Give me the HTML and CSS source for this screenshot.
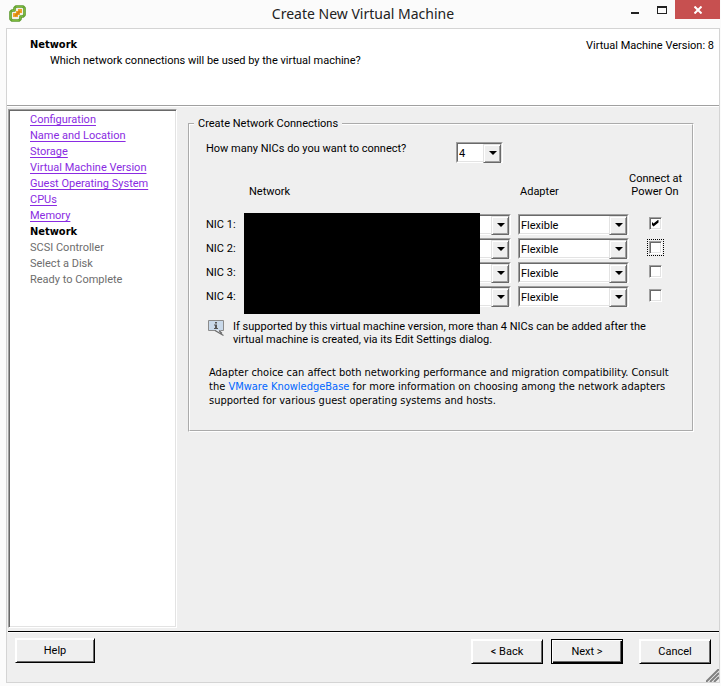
FILE: index.html
```html
<!DOCTYPE html>
<html lang="en">
<head>
<meta charset="utf-8">
<title>Create New Virtual Machine</title>
<link rel="stylesheet" href="styles.css">
</head>
<body>
<header class="titlebar">
  <svg class="app-icon" viewBox="0 0 17 17" width="17" height="17" aria-hidden="true">
    <path d="M7 1.500h7l1.500 1.500v7L14 11.500h-2.500V14L10 15.500H3L1.500 14V7L3 5.500h2.500V3z" fill="#f4f1ea" stroke="#5c9a2c" stroke-width="2.600" stroke-linejoin="round"/>
    <path d="M7 1.500h7l1.500 1.500v7L14 11.500h-2.500V14L10 15.500H3L1.500 14V7L3 5.500h2.500V3z" fill="none" stroke="#7cba3c" stroke-width="1"/>
    <path d="M9 4h4v4h-2v2H9v2H4V8h3V6h2z" fill="#f2a62c"/>
    <path d="M6 11l5-5" stroke="#d98410" stroke-width="2"/>
  </svg>
  <h1 class="title">Create New Virtual Machine</h1>
  <div class="window-controls">
    <button class="win-btn" type="button" aria-label="Minimize"><svg viewBox="0 0 10 12" width="10" height="12"><path d="M1 9h8" stroke="#222" stroke-width="2"/></svg></button>
    <button class="win-btn" type="button" aria-label="Maximize"><svg viewBox="0 0 10 12" width="10" height="12"><path d="M0 2h10v8H0zM1 4v5h8V4z" fill="#222" fill-rule="evenodd"/></svg></button>
    <button class="win-btn win-close" type="button" aria-label="Close"><svg viewBox="0 0 8 8" width="8" height="8"><path d="M.5.500l7 7M7.500.500l-7 7" stroke="#fff" stroke-width="2"/></svg></button>
  </div>
</header>
<div class="window">
  <section class="banner">
    <div>
      <h2 class="step-title">Network</h2>
      <p class="step-help">Which network connections will be used by the virtual machine?</p>
    </div>
    <p class="version">Virtual Machine Version: 8</p>
  </section>
  <div class="content">
    <nav class="steps">
      <ul>
        <li><a href="#configuration">Configuration</a></li>
        <li><a href="#name">Name and Location</a></li>
        <li><a href="#storage">Storage</a></li>
        <li><a href="#version">Virtual Machine Version</a></li>
        <li><a href="#guest">Guest Operating System</a></li>
        <li><a href="#cpus">CPUs</a></li>
        <li><a href="#memory">Memory</a></li>
        <li class="current" aria-current="step">Network</li>
        <li>SCSI Controller</li>
        <li>Select a Disk</li>
        <li>Ready to Complete</li>
      </ul>
    </nav>
    <main class="panel">
      <fieldset class="group">
        <legend>Create Network Connections</legend>
        <div class="count-row">
          <label for="nic-count">How many NICs do you want to connect?</label>
          <span class="combo combo-count"><select id="nic-count"><option>4</option></select></span>
        </div>
        <div class="nics">
          <table class="nic-table">
            <thead>
              <tr><th class="col-name"></th><th class="col-network">Network</th><th class="col-adapter">Adapter</th><th class="col-power">Connect at<br>Power On</th></tr>
            </thead>
            <tbody>
              <tr>
                <td><label for="net1">NIC 1:</label></td>
                <td><span class="combo combo-network"><select id="net1"><option></option></select></span></td>
                <td><span class="combo"><select aria-label="NIC 1 adapter"><option>Flexible</option></select></span></td>
                <td class="power"><input type="checkbox" aria-label="Connect NIC 1 at power on" checked></td>
              </tr>
              <tr>
                <td><label for="net2">NIC 2:</label></td>
                <td><span class="combo combo-network"><select id="net2"><option></option></select></span></td>
                <td><span class="combo"><select aria-label="NIC 2 adapter"><option>Flexible</option></select></span></td>
                <td class="power"><input class="focused" type="checkbox" aria-label="Connect NIC 2 at power on"></td>
              </tr>
              <tr>
                <td><label for="net3">NIC 3:</label></td>
                <td><span class="combo combo-network"><select id="net3"><option></option></select></span></td>
                <td><span class="combo"><select aria-label="NIC 3 adapter"><option>Flexible</option></select></span></td>
                <td class="power"><input type="checkbox" aria-label="Connect NIC 3 at power on"></td>
              </tr>
              <tr>
                <td><label for="net4">NIC 4:</label></td>
                <td><span class="combo combo-network"><select id="net4"><option></option></select></span></td>
                <td><span class="combo"><select aria-label="NIC 4 adapter"><option>Flexible</option></select></span></td>
                <td class="power"><input type="checkbox" aria-label="Connect NIC 4 at power on"></td>
              </tr>
            </tbody>
          </table>
          <div class="redaction"></div>
        </div>
        <div class="note">
          <svg viewBox="0 0 17 17" width="17" height="17" aria-hidden="true">
            <path d="M.5.500h15v10H.5z" fill="#c9d9ea" stroke="#8b8b8b"/>
            <path d="M7 10l8.500 5.500L12 10z" fill="#e8eef4"/>
            <path d="M7 10.500l8.500 5M11 10.500l3 3" stroke="#6a6a6a" stroke-width="1.200" fill="none"/>
            <path d="M7 2h2v1.500H7zM6 4.500h3V8h1v1H6V8h1V5.500H6z" fill="#555"/>
          </svg>
          <p>If supported by this virtual machine version, more than 4 NICs can be added after the<br>virtual machine is created, via its Edit Settings dialog.</p>
        </div>
        <p class="advice">Adapter choice can affect both networking performance and migration compatibility. Consult<br>the <a href="#kb">VMware KnowledgeBase</a> for more information on choosing among the network adapters<br>supported for various guest operating systems and hosts.</p>
      </fieldset>
    </main>
  </div>
  <footer class="actions">
    <button class="btn btn-help" type="button">Help</button>
    <button class="btn" type="button">&lt; Back</button>
    <button class="btn btn-default" type="button">Next &gt;</button>
    <button class="btn btn-cancel" type="button">Cancel</button>
    <svg class="grip" viewBox="0 0 13 13" width="13" height="13" aria-hidden="true"><path d="M0 13L13 0M4 13l9-9M8 13l5-5" stroke="#808080" stroke-width="2"/></svg>
  </footer>
</div>
</body>
</html>
```
FILE: styles.css
```css
* { box-sizing: border-box; }
body {
  margin: 0;
  min-height: 100vh;
  display: flex;
  flex-direction: column;
  background: #fbfbfb;
  color: #000;
  font: 11px/14px Roboto, sans-serif;
}
h1, h2, p, ul { margin: 0; padding: 0; font-size: inherit; font-weight: normal; }
button, select, input { font: inherit; color: inherit; margin: 0; border-radius: 0; }

.titlebar {
  display: grid;
  grid-template-columns: 1fr auto 1fr;
  height: 28px;
  padding: 0 4px 0 9px;
}
.app-icon { margin-top: 5px; }
.title { font: 14px/28px "Noto Sans", sans-serif; color: #222; }
.window-controls { display: flex; justify-content: flex-end; height: 19px; margin-right: -3px; }
.win-btn {
  width: 27px;
  padding: 0;
  border: 0;
  background: none;
  display: flex;
  align-items: center;
  justify-content: center;
}
.win-close { width: 45px; background: #c75050; }

.window {
  flex: 1;
  display: flex;
  flex-direction: column;
  margin: 0 1px 3px 6px;
  border: 1px solid #d4d4d4;
  background: #efefef;
}
.banner {
  display: flex;
  justify-content: space-between;
  height: 77px;
  padding: 9px 5px 0 23px;
  background: #fff;
  border-bottom: 1px solid #a0a0a0;
}
.step-title { font: bold 11px/14px "DejaVu Sans Condensed", sans-serif; }
.step-help { padding: 2px 0 0 20px; }
.version { padding-top: 1px; }

.content { flex: 1; display: flex; gap: 11px; padding: 2px 25px 3px 1px; border-top: 1px solid #fff; }
.steps {
  width: 169px;
  padding: 0 0 0 20px;
  background: #fff;
  border: 1px solid;
  border-color: #a0a0a0 #fff #fff #a0a0a0;
  box-shadow: inset 1px 1px #696969, inset -1px -1px #e3e3e3;
  line-height: 16px;
  color: #6d6d6d;
}
.steps ul { list-style: none; padding: 2px 1px; }
.steps a { color: #8a2be2; text-underline-offset: 2px; }
.steps .current { color: #000; font: bold 11px/16px "DejaVu Sans Condensed", sans-serif; }

.panel { flex: 1; padding-top: 8px; }
.group { min-width: 0; margin: 0; padding: 11px 9px 22px 16px; border: 2px groove #fff; }
.group legend { padding: 0 4px; margin-left: -12px; }
.count-row { display: flex; }
.count-row label { width: 250px; }

.combo {
  position: relative;
  display: block;
  height: 21px;
  background: #fff;
  border: 1px solid;
  border-color: #a0a0a0 #fff #fff #a0a0a0;
}
.combo select {
  display: block;
  width: 100%;
  height: 19px;
  padding: 2px 18px 0 1px;
  appearance: none;
  background: #fff;
  border: 1px solid;
  border-color: #696969 #e3e3e3 #e3e3e3 #696969;
}
.combo::before {
  content: "";
  position: absolute;
  top: 1px;
  right: 1px;
  width: 16px;
  height: 17px;
  background: #efefef;
  border: 1px solid;
  border-color: #e3e3e3 #696969 #696969 #e3e3e3;
  box-shadow: inset 1px 1px #fff, inset -1px -1px #a0a0a0;
  pointer-events: none;
}
.combo::after {
  content: "";
  position: absolute;
  top: 8px;
  right: 5px;
  border: 4px solid transparent;
  border-top-color: #000;
  border-bottom: 0;
  pointer-events: none;
}
.combo-count { width: 47px; }
.combo-network { margin-right: 7px; }

.nics { position: relative; margin-top: 9px; padding-right: 2px; }
.nic-table { width: 100%; table-layout: fixed; border-collapse: collapse; line-height: 13px; }
.nic-table th { padding: 0 0 14px; font-weight: normal; text-align: left; vertical-align: bottom; white-space: nowrap; }
.nic-table td { height: 24px; padding: 0; }
.nic-table .col-name { width: 38px; }
.nic-table .col-network { padding-left: 5px; }
.nic-table .col-adapter { width: 111px; padding-left: 2px; }
.nic-table .col-power { width: 52px; text-align: center; }
.nic-table .power { padding-bottom: 2px; }
.power input {
  appearance: none;
  display: block;
  width: 13px;
  height: 13px;
  margin: 0 auto;
  background: #fff;
  border: 1px solid;
  border-color: #a0a0a0 #fff #fff #a0a0a0;
  box-shadow: inset 1px 1px #696969, inset -1px -1px #e3e3e3;
}
.power input:checked::before {
  content: "";
  display: block;
  width: 7px;
  height: 7px;
  margin: 2px;
  background: #000;
  clip-path: polygon(0 29%, 29% 57%, 100% 0, 100% 43%, 29% 100%, 0 71%);
}
.power .focused { outline: 1px dotted #000; outline-offset: 1px; }
.redaction { position: absolute; left: 38px; right: 203px; top: 41px; bottom: -6px; background: #000; }

.note { display: flex; gap: 8px; margin: 12px 0 20px 2px; line-height: 13px; white-space: nowrap; }
.advice { padding-left: 3px; font-family: "DejaVu Sans Condensed", sans-serif; white-space: nowrap; }
.advice a { color: #0066ff; text-decoration: none; }

.actions {
  position: relative;
  display: flex;
  align-items: flex-start;
  gap: 8px;
  height: 51px;
  margin-left: 1px;
  padding: 7px 8px 0 7px;
  border-top: 1px solid #000;
  box-shadow: inset 0 1px #fff;
}
.btn {
  width: 72px;
  height: 25px;
  padding: 1px 0 0;
  background: #efefef;
  border: 1px solid;
  border-color: #fff #000 #000 #fff;
  box-shadow: inset 1px 1px #fff, inset -1px -1px #696969;
}
.btn-help { width: 80px; margin: -1px auto 0 0; }
.btn-default { border-color: #000; box-shadow: inset 1px 1px #fff, inset -1px -1px #000, inset -2px -2px #696969; }
.btn-cancel { margin-left: 8px; }
.grip { position: absolute; right: 0; bottom: 0; }
```
